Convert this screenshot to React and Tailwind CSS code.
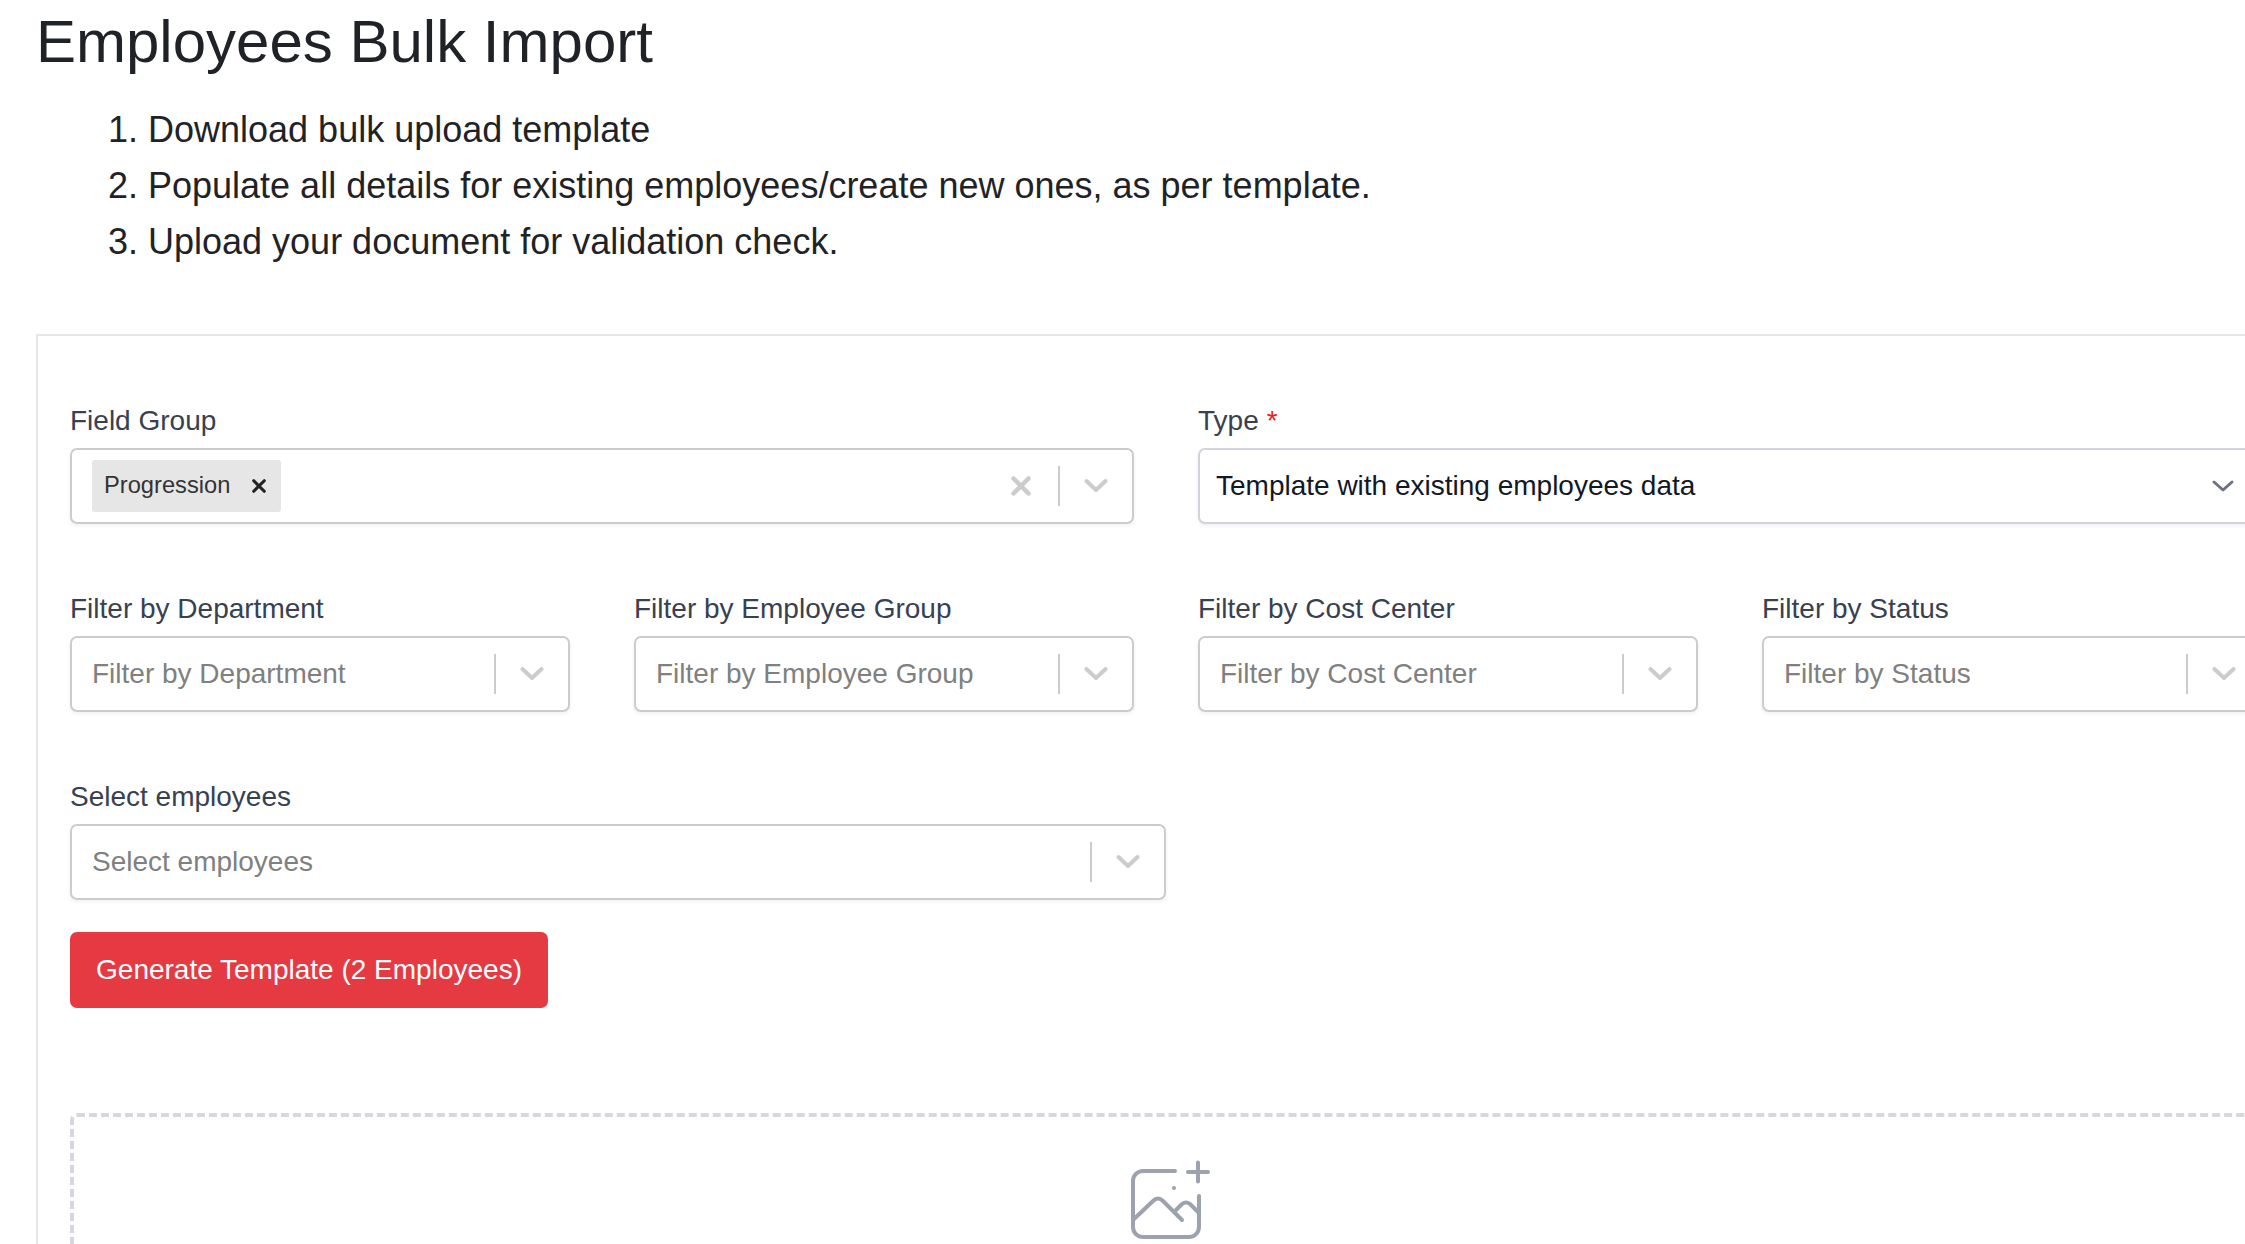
import React from 'react';

const font = "font-['Liberation_Sans',Arial,sans-serif]";

function Chevron({ className }) {
  return (
    <svg width="24" height="24" viewBox="0 0 24 24" className={className} fill="none" stroke="currentColor" strokeWidth="4" strokeLinecap="round" strokeLinejoin="round">
      <path d="M2.5 7 L12 16 L21.5 7" />
    </svg>
  );
}

function ClearX({ className, size = 20, width = 4.5 }) {
  return (
    <svg width={size} height={size} viewBox="0 0 20 20" className={className} fill="none" stroke="currentColor" strokeWidth={width} strokeLinecap="round">
      <path d="M2.5 2.5 L17.5 17.5 M17.5 2.5 L2.5 17.5" />
    </svg>
  );
}

function Field({ label, required, children }) {
  return (
    <div className="flex flex-col">
      <label className="text-[28px] leading-[40px] h-[40px] text-[#374151]">
        {label}
        {required && <span className="text-[#ef1c1c] ml-[8px]">*</span>}
      </label>
      <div className="mt-[7px]">{children}</div>
    </div>
  );
}

function SelectBox({ placeholder, children, clearable }) {
  return (
    <div className="h-[76px] w-full flex items-center bg-white border-2 border-[#cccccc] rounded-[7px] shadow-[0_2px_4px_rgba(0,0,0,0.06)]">
      <div className="flex-1 min-w-0 pl-[20px] text-[28px] text-[#808080]">
        {children || placeholder}
      </div>
      {clearable && <ClearX className="text-[#cccccc] mr-[27px]" />}
      <div className="w-[2px] h-[40px] bg-[#cccccc]" />
      <Chevron className="text-[#cccccc] mx-[24px]" />
    </div>
  );
}

export default function App() {
  return (
    <div className={`${font} w-[2245px] h-[1244px] overflow-hidden bg-white pl-[36px]`}>
      <h1 className="text-[60px] leading-[84px] text-[#1f2328]">Employees Bulk Import</h1>

      <ol className="list-decimal pl-[112px] mt-[18px] text-[36px] leading-[56px] text-[#1f2328]">
        <li>Download bulk upload template</li>
        <li>Populate all details for existing employees/create new ones, as per template.</li>
        <li>Upload your document for validation check.</li>
      </ol>

      <div className="mt-[64px] w-[2300px] h-[1000px] border-l-2 border-t-2 border-[#e5e7eb] pl-[32px] pt-[65px]">
        <div className="grid grid-cols-[1064px_1064px] gap-x-[64px]">
          <Field label="Field Group">
            <SelectBox clearable>
              <div className="flex">
                <div className="flex items-center gap-[22px] h-[52px] bg-[#e6e6e6] rounded-[3px] pl-[12px] pr-[15px] text-[23.7px] text-[#333333]">
                  Progression
                  <ClearX size={14} width={4.5} className="text-[#222222]" />
                </div>
              </div>
            </SelectBox>
          </Field>
          <Field label="Type" required>
            <div className="h-[76px] w-full flex items-center justify-between bg-white border-2 border-[#d1d5db] rounded-[7px] pl-[16px] pr-[25px] shadow-[0_2px_4px_rgba(0,0,0,0.06)] text-[28px] text-[#111827]">
              Template with existing employees data
              <svg width="24" height="24" viewBox="0 0 24 24" className="text-[#6b7280]" fill="none" stroke="currentColor" strokeWidth="3" strokeLinecap="round" strokeLinejoin="round">
                <path d="M3 8 L12 16 L21 8" />
              </svg>
            </div>
          </Field>
        </div>

        <div className="grid grid-cols-[500px_500px_500px_500px] gap-x-[64px] mt-[65px]">
          <Field label="Filter by Department"><SelectBox placeholder="Filter by Department" /></Field>
          <Field label="Filter by Employee Group"><SelectBox placeholder="Filter by Employee Group" /></Field>
          <Field label="Filter by Cost Center"><SelectBox placeholder="Filter by Cost Center" /></Field>
          <Field label="Filter by Status"><SelectBox placeholder="Filter by Status" /></Field>
        </div>

        <div className="w-[1096px] mt-[65px]">
          <Field label="Select employees"><SelectBox placeholder="Select employees" /></Field>
        </div>

        <button type="button" className="mt-[32px] block h-[76px] w-[478px] rounded-[7px] bg-[#e53a42] text-white text-[28px]">
          Generate Template (2 Employees)
        </button>

        <div className="mt-[105px] w-[2192px] h-[400px] rounded-[7px] border-[4px] border-dashed border-[#d6d8e0] flex justify-center">
          <svg width="88" height="90" viewBox="0 0 88 90" className="mt-[38px] text-[#9ca3af]" fill="none" stroke="currentColor" strokeWidth="4" strokeLinecap="round" strokeLinejoin="round">
            <path d="M53 16 H21 a10 10 0 0 0 -10 10 V72 a10 10 0 0 0 10 10 H67 a10 10 0 0 0 10 -10 V41" />
            <path d="M12 64 L31 46 Q36 41 41 46 L60 65" />
            <path d="M54 55 L60 49 Q64 46 68 49 L76 57" />
            <path d="M66 17 H86 M76 7.5 V26.5" />
            <path d="M52 33 h0.01" />
          </svg>
        </div>
      </div>
    </div>
  );
}
